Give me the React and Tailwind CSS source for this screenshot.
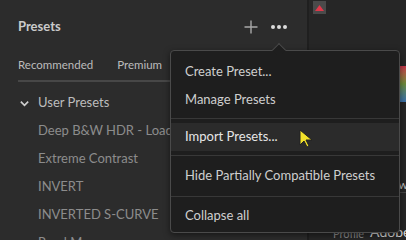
import { useState } from "react";

const presets = [
    "Deep B&W HDR - Loaded",
    "Extreme Contrast",
    "INVERT",
    "INVERTED S-CURVE",
    "Road Map",
];

function MenuItem({ label, active }) {
    return (
        <div
            className={
                "h-[28px] flex items-center px-[14px] " +
                (active ? "bg-[#2b2b2b] text-[#e6e6e6]" : "text-[#cfcfcf]")
            }
        >
            {label}
        </div>
    );
}

export default function App() {
    const [open] = useState(true);

    return (
        <div className="relative w-[406px] h-[240px] overflow-hidden flex bg-[#2a2a2a] font-['Lato',sans-serif]">
            <div className="w-[307px] shrink-0 bg-[#2c2c2c]">
                <div className="h-[54px] flex items-center pl-[18px] pr-[20px]">
                    <h2 className="text-[13px] font-bold text-[#cacaca] flex-1">
                        Presets
                    </h2>
                    <svg width="14" height="14" viewBox="0 0 14 14" className="mr-[13px]">
                        <path d="M7 0.5v13M0.5 7h13" stroke="#a8a8a8" strokeWidth="1.4" />
                    </svg>
                    <span className="flex gap-[2px]">
                        <i className="w-[4px] h-[4px] rounded-full bg-[#dcdcdc]" />
                        <i className="w-[4px] h-[4px] rounded-full bg-[#dcdcdc]" />
                        <i className="w-[4px] h-[4px] rounded-full bg-[#dcdcdc]" />
                    </span>
                </div>
                <div className="flex gap-[24px] pl-[18px] text-[11.5px] text-[#bcbcbc] h-[22px] items-center">
                    <span>Recommended</span>
                    <span>Premium</span>
                </div>
                <div className="ml-[18px] mr-[20px] mt-[4px] h-[2px] bg-[#474747]" />
                <div className="flex items-center pl-[19px] mt-[11px] h-[20px] text-[13px] text-[#bdbdbd]">
                    <svg width="11" height="11" viewBox="0 0 12 12" className="mr-[8px]">
                        <path d="M2 4l4 4 4-4" fill="none" stroke="#cfcfcf" strokeWidth="1.8" />
                    </svg>
                    User Presets
                </div>
                <ul className="mt-[4px] pl-[38px] text-[13px] text-[#8c8c8c]">
                    {presets.map((p) => (
                        <li key={p} className="h-[28px] flex items-center whitespace-nowrap">
                            {p}
                        </li>
                    ))}
                </ul>
            </div>
            <div className="w-[2px] shrink-0 bg-[#1f1f1f]" />
            <div className="flex-1 bg-[#262626] relative">
                <div className="ml-[4px] mt-[1px] w-[13px] h-[13px] bg-[#4a4a4a] flex items-center justify-center">
                    <svg width="9" height="6" viewBox="0 0 9 6">
                        <path d="M4.5 0L9 6H0z" fill="#e0384a" />
                    </svg>
                </div>
                <div className="absolute right-0 top-[66px] w-[8px] h-[36px] bg-gradient-to-b from-[#c2334a] via-[#6b8a3a] to-[#3b6fa8]" />
                <div className="absolute right-0 top-[192px] w-[8px] h-[1px] bg-[#444]" />
                <div className="absolute right-[-2px] top-[176px] text-[12px] text-[#bdbdbd]">w</div>
                <div className="absolute left-[24px] bottom-[-2px] flex gap-[6px] items-end whitespace-nowrap">
                    <span className="text-[11px] text-[#8a8a8a]">Profile</span>
                    <span className="text-[14px] text-[#d6d6d6]">Adobe</span>
                </div>
            </div>

            {open && (
                <div className="absolute left-[170px] top-[50px] w-[230px] h-[183px] bg-[#1e1e1e] border border-[#4a4a4a] rounded-[4px] py-[7px] text-[13px] shadow-[0_2px_6px_rgba(0,0,0,0.5)]">
                    <div className="absolute top-[-6px] left-[103px] w-[10px] h-[10px] rotate-45 bg-[#1e1e1e] border-l border-t border-[#4a4a4a]" />
                    <MenuItem label="Create Preset..." />
                    <MenuItem label="Manage Presets" />
                    <div className="my-[4px] h-px bg-[#383838]" />
                    <MenuItem label="Import Presets..." active />
                    <div className="my-[4px] h-px bg-[#383838]" />
                    <div className="h-[32px] flex items-center px-[14px] text-[#cfcfcf]">
                        Hide Partially Compatible Presets
                    </div>
                    <div className="my-[4px] h-px bg-[#383838]" />
                    <div className="h-[30px] flex items-center px-[14px] text-[#cfcfcf]">
                        Collapse all
                    </div>
                </div>
            )}

            <svg
                className="absolute left-[299px] top-[129px]"
                width="14"
                height="20"
                viewBox="0 0 14 20"
            >
                <path d="M1 1v15l4-4 3 6 2-1-3-6h6z" fill="#f2e12a" stroke="#222" strokeWidth="1" />
            </svg>
        </div>
    );
}
